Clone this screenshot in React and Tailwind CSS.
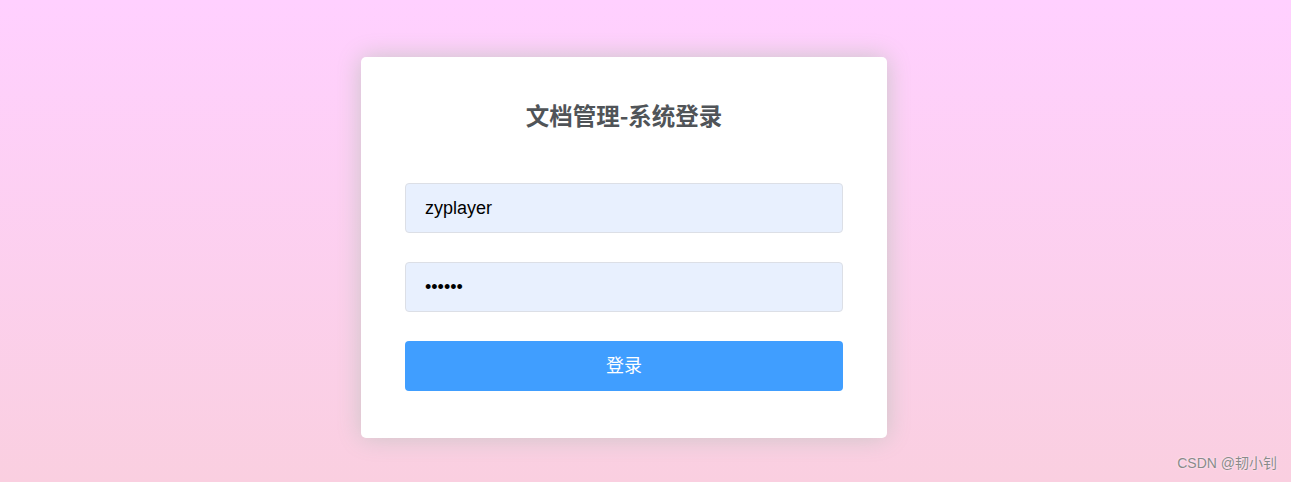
import React from 'react'

export default function App() {
  return (
    <div className="relative h-[482px] w-full overflow-hidden bg-gradient-to-b from-[#ffd0ff] to-[#facfe0] font-['Liberation_Sans','Noto_Sans_CJK_SC',sans-serif]">
      <div className="flex pt-[57px] pl-[361px]">
        <div className="w-[526px] rounded-[5px] bg-white px-[44px] pt-[42px] pb-[47px] shadow-[0_0_25px_#cac6c6]">
          <h3 className="text-center text-[23.5px] leading-[32px] font-bold text-[#505458] font-['Noto_Sans_CJK_SC',sans-serif]">
            文档管理-系统登录
          </h3>
          <form className="mt-[52px] flex flex-col gap-[29px]" onSubmit={(e) => e.preventDefault()}>
            <input
              type="text"
              defaultValue="zyplayer"
              className="h-[50px] w-full rounded-[4px] border border-[#dcdfe6] bg-[#e8f0fe] px-[19px] text-[18px] text-black outline-none"
            />
            <input
              type="password"
              defaultValue="123456"
              className="h-[50px] w-full rounded-[4px] border border-[#dcdfe6] bg-[#e8f0fe] px-[19px] text-[18px] text-black outline-none"
            />
            <button
              type="submit"
              className="h-[50px] w-full rounded-[4px] bg-[#409eff] pb-[4px] text-[18px] text-white font-['Noto_Sans_CJK_SC',sans-serif]"
            >
              登录
            </button>
          </form>
        </div>
      </div>
      <div className="absolute right-[14px] bottom-[8px] text-[14px] text-[#8a8a8a] [text-shadow:0_0_2px_#fff]">
        CSDN @韧小钊
      </div>
    </div>
  )
}
